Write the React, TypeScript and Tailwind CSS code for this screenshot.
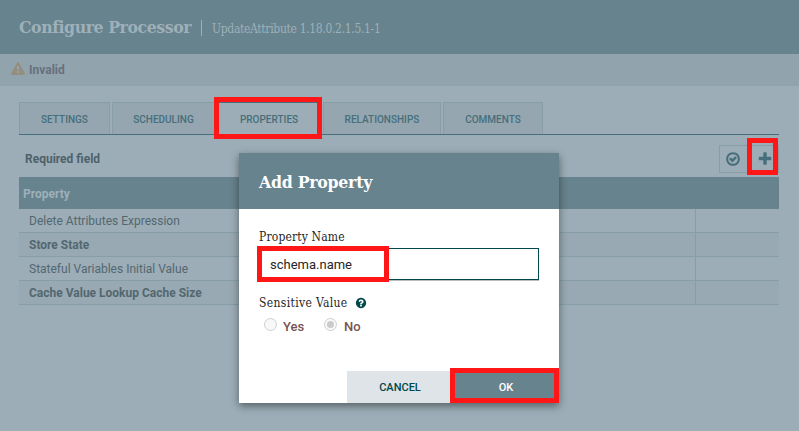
import type { ReactNode } from 'react';

const icons = {
  warning:
    'M1024 1375v-190q0-14-9.5-23.5t-22.5-9.5h-192q-13 0-22.5 9.5t-9.5 23.5v190q0 14 9.5 23.5t22.5 9.5h192q13 0 22.5-9.5t9.5-23.5zm-2-374l18-459q0-12-10-19-13-11-24-11h-220q-11 0-24 11-10 7-10 21l17 457q0 10 10 16.5t24 6.5h185q14 0 23.5-6.5t10.5-16.5zm-14-934l768 1408q35 63-2 126-17 29-46.5 46t-63.5 17h-1536q-34 0-63.5-17t-46.5-46q-37-63-2-126l768-1408q17-31 47-49t65-18 65 18 47 49z',
  plus:
    'M1600 736v192q0 40-28 68t-68 28h-416v416q0 40-28 68t-68 28h-192q-40 0-68-28t-28-68v-416h-416q-40 0-68-28t-28-68v-192q0-40 28-68t68-28h416v-416q0-40 28-68t68-28h192q40 0 68 28t28 68v416h416q40 0 68 28t28 68z',
  check:
    'M1299 813l-422 422q-19 19-45 19t-45-19l-294-294q-19-19-19-45t19-45l102-102q19-19 45-19t45 19l147 147 275-275q19-19 45-19t45 19l102 102q19 19 19 45t-19 45zm141 83q0-148-73-273t-198-198-273-73-273 73-198 198-73 273 73 273 198 198 273 73 273-73 198-198 73-273zm224 0q0 209-103 385.5t-279.5 279.5-385.5 103-385.5-103-279.5-279.5-103-385.5 103-385.5 279.5-279.5 385.5-103 385.5 103 279.5 279.5 103 385.5z',
  question:
    'M1024 1376v-192q0-14-9-23t-23-9h-192q-14 0-23 9t-9 23v192q0 14 9 23t23 9h192q14 0 23-9t9-23zm256-672q0-88-55.5-163t-138.5-116-170-41q-243 0-371 213-15 24 8 42l132 100q7 6 19 6 16 0 25-12 53-68 86-92 34-24 86-24 48 0 85.5 26t37.5 59q0 38-20 61t-68 45q-63 28-115.5 86.5t-52.5 125.5v36q0 14 9 23t23 9h192q14 0 23-9t9-23q0-19 21.5-49.5t54.5-49.5q32-18 49-28.5t46-35 44.5-48 28-60.5 12.5-81zm384 192q0 209-103 385.5t-279.5 279.5-385.5 103-385.5-103-279.5-279.5-103-385.5 103-385.5 279.5-279.5 385.5-103 385.5 103 279.5 279.5 103 385.5z',
};

function Icon({ name, className }: { name: keyof typeof icons; className: string }) {
  return (
    <svg viewBox="0 0 1792 1792" fill="currentColor" className={`shrink-0 ${className}`}>
      <path d={icons[name]} />
    </svg>
  );
}

function Slab({ className, children }: { className: string; children: ReactNode }) {
  return (
    <span
      className={`inline-block whitespace-nowrap font-['Roboto_Slab','DejaVu_Serif_Condensed','DejaVu_Serif',serif] ${className}`}
    >
      {children}
    </span>
  );
}

const tabs = [
  { label: 'SETTINGS', width: 'w-[91px]' },
  { label: 'SCHEDULING', width: 'w-[103px]' },
  { label: 'PROPERTIES', width: 'w-[104px]', active: true },
  { label: 'RELATIONSHIPS', width: 'w-[118px]' },
  { label: 'COMMENTS', width: 'w-[100px]' },
];

const rows = [
  { label: 'Delete Attributes Expression' },
  { label: 'Store State', required: true },
  { label: 'Stateful Variables Initial Value' },
  { label: 'Cache Value Lookup Cache Size', required: true },
];

function AddPropertyDialog() {
  return (
    <div className="absolute left-[239px] top-[153px] flex h-[250px] w-[320px] flex-col bg-white shadow-[0_3px_8px_rgba(0,0,0,0.45)]">
      <div className="flex h-14 shrink-0 items-center bg-[#67838e] pt-0.5 pl-5 text-white">
        <Slab className="text-[17.5px] leading-6 font-bold tracking-[-0.25px]">Add Property</Slab>
      </div>
      <div className="flex grow flex-col px-5 pt-5 text-[#262626]">
        <Slab className="h-[19px] text-[12px] leading-4 tracking-[0.15px]">Property Name</Slab>
        <div className="flex h-8 shrink-0 items-center border border-[#004849] pt-0.5 pl-2.5 text-[13px] shadow-[0_1px_0_#bbb]">
          schema.name
        </div>
        <div className="mt-[15px] flex h-4 items-center">
          <Slab className="w-24 text-[12px] leading-4 tracking-[0.35px]">Sensitive Value</Slab>
          <Icon name="question" className="size-3 text-[#004849]" />
        </div>
        <div className="mt-[5px] flex h-4 items-center pl-[5px] text-[13px] font-medium text-[#775351]">
          <span className="size-[13px] rounded-full border border-[#cfcfcf] bg-[#f8f8f8]" />
          <span className="mt-1.5 w-[47px] pl-1.5">Yes</span>
          <span className="flex size-[13px] items-center justify-center rounded-full border border-[#cfcfcf] bg-[#f8f8f8]">
            <span className="size-[7px] rounded-full bg-[#cbcbcb]" />
          </span>
          <span className="mt-1.5 pl-[7px]">No</span>
        </div>
      </div>
      <div className="flex h-8 shrink-0 justify-end text-[11px] font-medium">
        <div className="flex w-[106px] items-center justify-center bg-[#dfe4e8] pt-0.5 text-[#004849]">CANCEL</div>
        <div className="flex w-[106px] items-center justify-center bg-[#67838e] pt-0.5 text-white">OK</div>
      </div>
    </div>
  );
}

export default function App() {
  return (
    <div className="relative h-[431px] w-[799px] overflow-hidden bg-[#9cadb7] font-[Roboto,'Liberation_Sans',sans-serif] text-[#53676f]">
      <header className="flex h-[54px] items-center bg-[#67838e] pl-[19px] text-[#9eb0b9]">
        <Slab className="w-[182px] text-[17.5px] leading-6 font-bold tracking-[-0.43px]">Configure Processor</Slab>
        <span className="mt-0.5 h-4 w-px bg-[#9eb0b9]" />
        <Slab className="ml-2.5 pt-[3px] text-[12px] leading-4 tracking-[-0.33px]">UpdateAttribute 1.18.0.2.1.5.1-1</Slab>
      </header>
      <div className="flex h-8 items-center gap-1 bg-[#91a4ad] pl-[11px] text-[12px] font-bold text-[#696f7d]">
        <Icon name="warning" className="size-3.5 -translate-y-px text-[#968e7d]" />
        Invalid
      </div>
      <main className="mt-4 ml-[19px] w-[760px]">
        <div className="flex h-[33px] gap-0.5 border-b border-[#466f7b] text-[10px] font-medium text-[#466f7b]">
          {tabs.map((t) => (
            <div
              key={t.label}
              className={`${t.width} flex items-center justify-center border border-b-0 pt-0.5 ${
                t.active ? 'border-[#8da1aa] border-t-[#466f7b] bg-[#9cadb7]' : 'border-[#879ea7] bg-[#95a6b0]'
              }`}
            >
              {t.label}
            </div>
          ))}
        </div>
        <div className="flex h-[42px] justify-between pt-2.5">
          <div className="pt-1.5 pl-1.5 text-[12px] leading-4 font-bold text-[#4e626a]">Required field</div>
          <div className="flex h-7 gap-0.5 text-[#466f7b]">
            <div className="flex w-[29px] items-center justify-center border border-[#879ea7] pr-0.5">
              <Icon name="check" className="size-4" />
            </div>
            <div className="flex w-[29px] items-center justify-center border border-[#879ea7]">
              <Icon name="plus" className="size-4" />
            </div>
          </div>
        </div>
        <div className="flex h-8 items-center bg-[#67838e] pt-px pl-1 text-[12px] font-bold text-[#9eb0b9]">Property</div>
        {rows.map((r, i) => (
          <div
            key={r.label}
            className={`flex h-6 border-b border-[#879ea7] text-[12px] leading-6 ${i % 2 ? 'bg-[#98a9b3]' : ''} ${
              r.required ? 'font-bold text-[#53676f]' : ''
            }`}
          >
            <div className="grow pl-2.5">{r.label}</div>
            <div className="w-[84px] shrink-0 border-l border-[#879ea7]" />
          </div>
        ))}
      </main>
      <AddPropertyDialog />
      <div className="absolute left-[214px] top-[97px] h-[42px] w-[108px] border-5 border-[#ff1616]" />
      <div className="absolute left-[747px] top-[138px] h-[37px] w-[31px] border-5 border-[#ff1616]" />
      <div className="absolute left-[257px] top-[246px] h-9 w-[132px] border-5 border-[#ff1616]" />
      <div className="absolute left-[450px] top-[368px] h-[35px] w-[109px] border-5 border-[#ff1616]" />
    </div>
  );
}
